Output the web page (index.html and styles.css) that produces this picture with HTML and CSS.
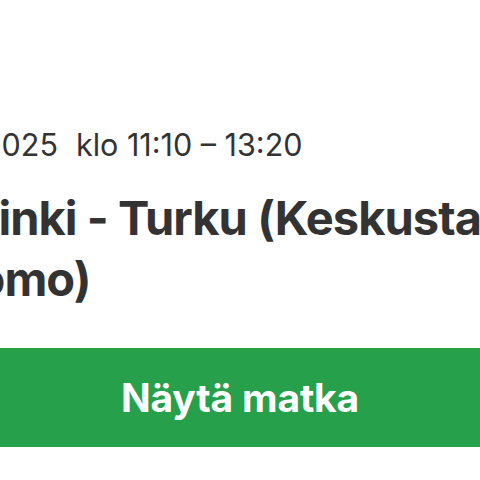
FILE: index.html
```html
<!DOCTYPE html>
<html lang="fi">
<head>
<meta charset="utf-8">
<title>Matka</title>
<link rel="stylesheet" href="styles.css">
</head>
<body>
<main class="card">
  <div class="trip">
    <p class="when"><span class="date">16.6.2025</span><span class="time">klo 11:10 – 13:20</span></p>
    <h1 class="route">Helsinki - Turku (Keskusta - Tuomo)</h1>
  </div>
  <button class="cta" type="button">Näytä matka</button>
</main>
</body>
</html>
```
FILE: styles.css
```css
html, body {
  margin: 0;
  padding: 0;
  background: #ffffff;
}
body {
  width: 480px;
  height: 480px;
  overflow: hidden;
  font-family: Inter, "Noto Sans", sans-serif;
  color: #333333;
}
.card {
  padding-top: 127px;
}
.trip {
  margin-left: -100px;
  width: 590px;
}
.when {
  margin: 0;
  padding-left: 18px;
  font-size: 30.5px;
  line-height: 36px;
  font-weight: 400;
  display: flex;
  gap: 18px;
  white-space: nowrap;
}
.route {
  margin: 24px 0 0 -10px;
  text-indent: 10px;
  font-size: 47px;
  line-height: 61px;
  font-weight: 700;
  letter-spacing: -0.02em;
}
.cta {
  display: block;
  width: 100%;
  height: 99px;
  margin-top: 39px;
  border: 0;
  padding: 0;
  background: #26a04b;
  color: #ffffff;
  font-family: Inter, "Noto Sans", sans-serif;
  font-size: 39px;
  font-weight: 700;
  letter-spacing: -0.005em;
}
```
